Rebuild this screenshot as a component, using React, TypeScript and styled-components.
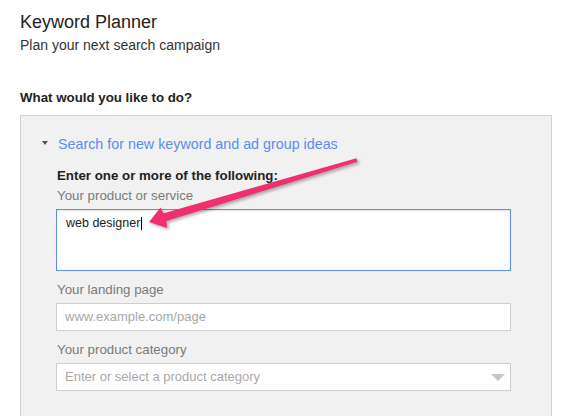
import styled, { createGlobalStyle } from "styled-components";

const GlobalStyle = createGlobalStyle`
  html,
  body {
    background: #fff;
    margin: 0;
  }

  body {
    color: #222;
    font-family: "Liberation Sans", Arial, sans-serif;
  }
`;

const StyledPage = styled.div`
  height: 416px;
  overflow: hidden;
  padding-left: 20px;
  position: relative;
  width: 587px;
  box-sizing: border-box;
`;

const StyledTitle = styled.h1`
  color: #222;
  font-size: 18px;
  font-weight: normal;
  line-height: 22px;
  margin: 11px 0 0;
`;

const StyledSubtitle = styled.p`
  color: #333;
  font-size: 14px;
  line-height: 18px;
  margin: 3px 0 0;
`;

const StyledQuestion = styled.h2`
  color: #222;
  font-size: 13.3px;
  font-weight: bold;
  line-height: 16px;
  margin: 36px 0 9px;
`;

const StyledPanel = styled.section`
  background-color: #f1f1f1;
  border: 1px solid #d2d2d2;
  box-sizing: border-box;
  height: 320px;
  padding: 19px 0 0;
  width: 532px;
`;

const StyledSectionToggle = styled.div`
  align-items: center;
  display: flex;
  gap: 10px;
  padding-left: 21px;
`;

const StyledCaret = styled.span`
  border-left: 3px solid transparent;
  border-right: 3px solid transparent;
  border-top: 4px solid #555;
  height: 0;
  margin-top: -2px;
  width: 0;
`;

const StyledSectionLink = styled.a`
  color: #5a8def;
  cursor: pointer;
  font-size: 14.3px;
  line-height: 18px;
  text-decoration: none;
`;

const StyledFields = styled.div`
  display: flex;
  flex-direction: column;
  padding: 15px 0 0 35px;
  width: 455px;
`;

const StyledIntro = styled.div`
  color: #222;
  font-size: 13.3px;
  font-weight: bold;
  line-height: 16px;
  margin: 0 0 4px 1px;
`;

const StyledLabel = styled.label<{ $gap?: number }>`
  color: #7a7a7a;
  font-size: 13.3px;
  line-height: 16px;
  margin: ${({ $gap = 0 }) => `${$gap}px 0 5px 1px`};
`;

const StyledBox = styled.div<{ $focused?: boolean; $tall?: boolean }>`
  align-items: ${({ $tall }) => ($tall ? "flex-start" : "center")};
  background: #fff;
  border: 1px solid ${({ $focused }) => ($focused ? "#5b8ff2" : "#cfcfcf")};
  box-shadow: ${({ $focused }) =>
    $focused ? "inset 0 1px 2px rgba(0, 0, 0, 0.12)" : "none"};
  box-sizing: border-box;
  display: flex;
  font-size: 13px;
  height: ${({ $tall }) => ($tall ? "62px" : "28px")};
  justify-content: space-between;
  line-height: 16px;
  padding: ${({ $tall }) => ($tall ? "5px 9px" : "5px 5px 5px 8px")};
`;

const StyledValue = styled.span`
  align-items: center;
  color: #222;
  display: inline-flex;
  font-size: 12.5px;
`;

const StyledCursor = styled.span`
  background: #000;
  display: inline-block;
  height: 13px;
  margin-left: 1px;
  width: 1px;
`;

const StyledPlaceholder = styled.span`
  color: #a8a8a8;
`;

const StyledDropArrow = styled.span`
  border-left: 7px solid transparent;
  border-right: 7px solid transparent;
  border-top: 7px solid #c6c6c6;
  height: 0;
  width: 0;
`;

const StyledPointer = styled.svg`
  filter: drop-shadow(2px 2px 1.5px rgba(0, 0, 0, 0.3));
  left: 0;
  pointer-events: none;
  position: absolute;
  top: 0;
`;

export default function App() {
  return (
    <>
      <GlobalStyle />
      <StyledPage>
        <StyledTitle>Keyword Planner</StyledTitle>
        <StyledSubtitle>Plan your next search campaign</StyledSubtitle>
        <StyledQuestion>What would you like to do?</StyledQuestion>

        <StyledPanel>
          <StyledSectionToggle>
            <StyledCaret />
            <StyledSectionLink>
              Search for new keyword and ad group ideas
            </StyledSectionLink>
          </StyledSectionToggle>

          <StyledFields>
            <StyledIntro>Enter one or more of the following:</StyledIntro>

            <StyledLabel>Your product or service</StyledLabel>
            <StyledBox $focused $tall>
              <StyledValue>
                web designer
                <StyledCursor />
              </StyledValue>
            </StyledBox>

            <StyledLabel $gap={11}>Your landing page</StyledLabel>
            <StyledBox>
              <StyledPlaceholder>www.example.com/page</StyledPlaceholder>
            </StyledBox>

            <StyledLabel $gap={11}>Your product category</StyledLabel>
            <StyledBox>
              <StyledPlaceholder>
                Enter or select a product category
              </StyledPlaceholder>
              <StyledDropArrow />
            </StyledBox>
          </StyledFields>
        </StyledPanel>

        <StyledPointer width="587" height="416" viewBox="0 0 587 416">
          <polygon
            fill="#f0306e"
            points="149,222 160.5,207.5 163.6,213.2 356.4,158.3 357.6,161.7 166.4,221 167,228"
          />
        </StyledPointer>
      </StyledPage>
    </>
  );
}
